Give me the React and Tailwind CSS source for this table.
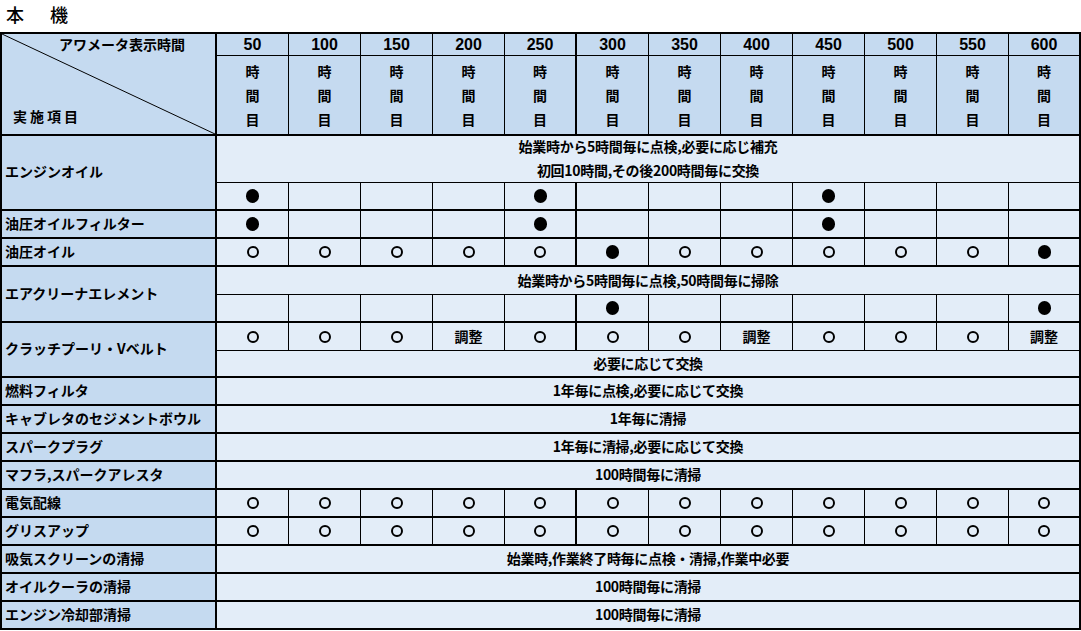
import React from "react";

const HOURS = [50, 100, 150, 200, 250, 300, 350, 400, 450, 500, 550, 600];

function Mark({ m }) {
  if (m === "o")
    return <span className="block w-[12px] h-[12px] rounded-full border-2 border-black" />;
  if (m === "x")
    return <span className="block w-[13px] h-[14px] rounded-full bg-black" />;
  if (m) return <span className="text-[14px] leading-none font-bold pb-[2px]">{m}</span>;
  return null;
}

function MarkRow({ marks, thick }) {
  return marks.map((m, i) => (
    <div
      key={i}
      className={
        "flex items-center justify-center bg-[#e3edf8] border-black " +
        (i === 4 || i === 11 ? "border-r-2 " : "border-r ") +
        (thick ? "border-b-2" : "border-b")
      }
    >
      <Mark m={m} />
    </div>
  ));
}

function Full({ lines, thick }) {
  return (
    <div
      className={
        "col-span-12 flex flex-col items-center justify-center pb-[2px] bg-[#e3edf8] border-r-2 border-black text-[14px] font-bold leading-[24px] tracking-[-0.3px] " +
        (thick ? "border-b-2" : "border-b")
      }
    >
      {lines.map((l, i) => (
        <span key={i}>{l}</span>
      ))}
    </div>
  );
}

function Label({ text, span }) {
  return (
    <div
      className={
        "flex items-center pl-[3px] pb-[3px] bg-[#c5daf0] border-r-2 border-b-2 border-black text-[14px] font-bold leading-none " +
        (span ? "row-span-2" : "")
      }
    >
      {text}
    </div>
  );
}

const all = (v) => Array(12).fill(v);
const at = (idx, v, base = "") =>
  Array.from({ length: 12 }, (_, i) => (idx.includes(i) ? v : base));

export default function App() {
  const circlesAdj = all("o").map((v, i) => ([3, 7, 11].includes(i) ? "調整" : v));
  const oilMarks = all("o").map((v, i) => ([5, 11].includes(i) ? "x" : v));

  return (
    <div
      className="bg-white text-black w-[1081px] h-[631px]"
      style={{ fontFamily: '"Noto Sans CJK JP", "Noto Sans", sans-serif' }}
    >
      <div className="h-[32px] flex items-center pl-[6px] pb-[4px] text-[18px] font-medium tracking-[4px] leading-none">
        本　機
      </div>
      <div className="grid w-fit grid-cols-[215px_repeat(12,72px)] grid-rows-[22px_80px_47px_28px_28px_28px_28px_28px_28px_27px_repeat(9,28px)] border-t-2 border-l-2 border-black">
        {/* header corner */}
        <div className="row-span-2 relative bg-[#c5daf0] border-r-2 border-b-2 border-black flex flex-col justify-between text-[14px] font-bold">
          <svg
            className="absolute inset-0 w-full h-full"
            preserveAspectRatio="none"
            viewBox="0 0 100 100"
          >
            <line
              x1="0"
              y1="0"
              x2="100"
              y2="100"
              stroke="black"
              strokeWidth="1"
              vectorEffect="non-scaling-stroke"
            />
          </svg>
          <span className="relative pl-[57px] leading-[20px]">アワメータ表示時間</span>
          <span className="relative pl-[11px] pb-[8px] leading-[20px] tracking-[3px]">実施項目</span>
        </div>
        {HOURS.map((h, i) => (
          <div
            key={h}
            className={
              "flex items-center justify-center bg-[#c5daf0] border-b border-black text-[16px] font-bold leading-none " +
              (i === 4 || i === 11 ? "border-r-2" : "border-r")
            }
            style={{ fontFamily: '"Liberation Sans", Arial, sans-serif' }}
          >
            {h}
          </div>
        ))}
        {HOURS.map((h, i) => (
          <div
            key={"t" + h}
            className={
              "flex flex-col items-center justify-center pb-[1px] bg-[#c5daf0] border-b-2 border-black text-[14px] font-bold leading-[24px] " +
              (i === 4 || i === 11 ? "border-r-2" : "border-r")
            }
          >
            <span>時</span>
            <span>間</span>
            <span>目</span>
          </div>
        ))}

        {/* エンジンオイル */}
        <Label text="エンジンオイル" span />
        <Full lines={["始業時から5時間毎に点検,必要に応じ補充", "初回10時間,その後200時間毎に交換"]} />
        <MarkRow marks={at([0, 4, 8], "x")} thick />

        <Label text="油圧オイルフィルター" />
        <MarkRow marks={at([0, 4, 8], "x")} thick />

        <Label text="油圧オイル" />
        <MarkRow marks={oilMarks} thick />

        <Label text="エアクリーナエレメント" span />
        <Full lines={["始業時から5時間毎に点検,50時間毎に掃除"]} />
        <MarkRow marks={at([5, 11], "x")} thick />

        <Label text="クラッチプーリ・Vベルト" span />
        <MarkRow marks={circlesAdj} />
        <Full lines={["必要に応じて交換"]} thick />

        <Label text="燃料フィルタ" />
        <Full lines={["1年毎に点検,必要に応じて交換"]} thick />

        <Label text="キャブレタのセジメントボウル" />
        <Full lines={["1年毎に清掃"]} thick />

        <Label text="スパークプラグ" />
        <Full lines={["1年毎に清掃,必要に応じて交換"]} thick />

        <Label text="マフラ,スパークアレスタ" />
        <Full lines={["100時間毎に清掃"]} thick />

        <Label text="電気配線" />
        <MarkRow marks={all("o")} thick />

        <Label text="グリスアップ" />
        <MarkRow marks={all("o")} thick />

        <Label text="吸気スクリーンの清掃" />
        <Full lines={["始業時,作業終了時毎に点検・清掃,作業中必要"]} thick />

        <Label text="オイルクーラの清掃" />
        <Full lines={["100時間毎に清掃"]} thick />

        <Label text="エンジン冷却部清掃" />
        <Full lines={["100時間毎に清掃"]} thick />
      </div>
    </div>
  );
}
